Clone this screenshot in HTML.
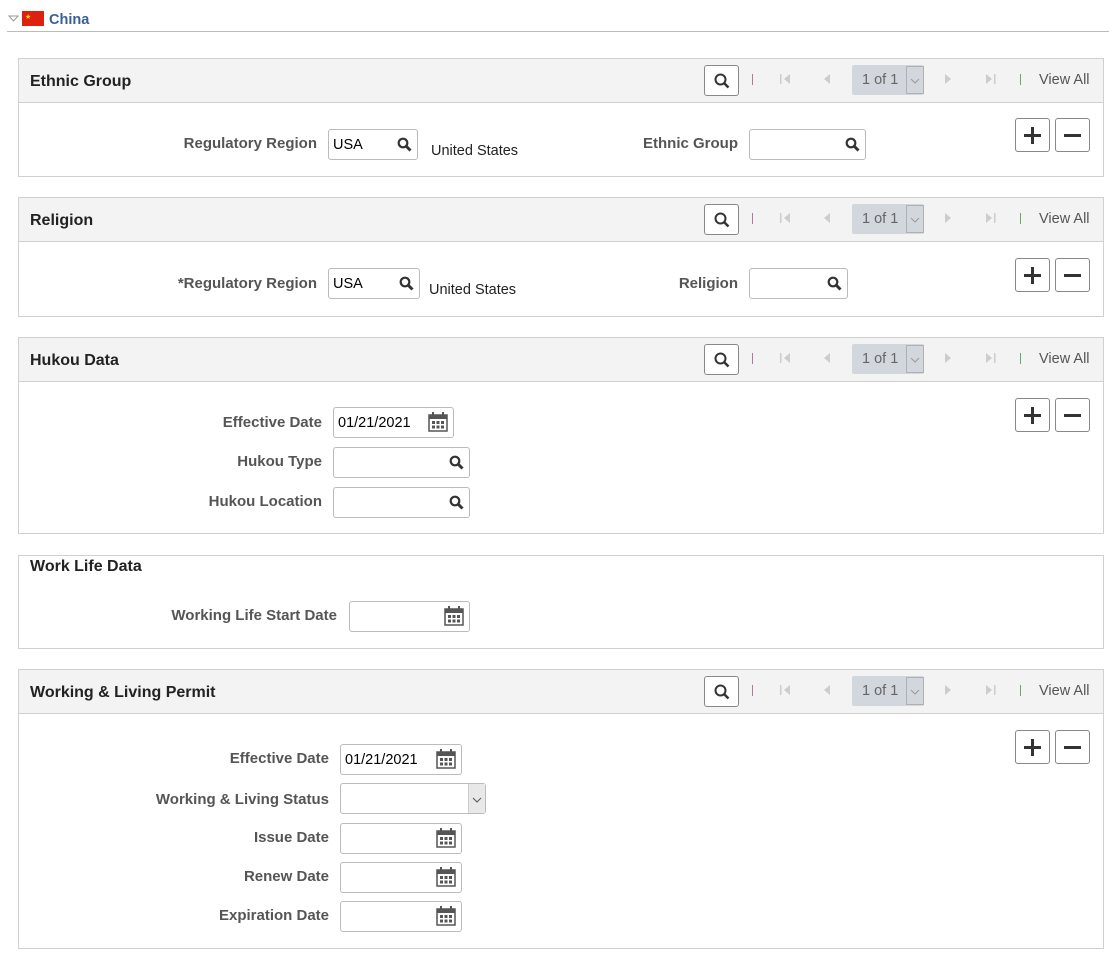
<!DOCTYPE html>
<html><head><meta charset="utf-8"><style>
*{box-sizing:border-box;margin:0;padding:0}
body{width:1116px;height:958px;background:#fff;font-family:"Liberation Sans",Arial,sans-serif;color:#333;position:relative;overflow:hidden}
.a{position:absolute}
.box{position:absolute;left:18px;width:1086px;border:1px solid #d0d0d0;background:#fff}
.hdr{position:absolute;left:0;top:0;width:100%;height:44px;background:#f3f3f3;border-bottom:1px solid #d0d0d0}
.ttl{position:absolute;left:11px;font-weight:bold;font-size:16px;color:#222}
.lbl{position:absolute;font-weight:bold;font-size:15px;color:#555;text-align:right;white-space:nowrap}
.inp{position:absolute;border:1px solid #bbb;border-radius:3px;background:#fff;height:31px;font-size:14.5px;color:#000;padding:7px 0 0 4px}
.btn{position:absolute;width:35px;height:34px;border:1px solid #888;border-radius:3px;background:#fff}
.txt{position:absolute;font-size:14.5px;color:#222}
</style></head><body>
<svg class="a" style="left:8px;top:15px" width="12" height="8"><path d="M1 1h9l-4.5 5z" fill="#fff" stroke="#999"/></svg>
<div class="a" style="left:22px;top:11px;width:22px;height:15px;background:#de2010"></div>
<div class="a" style="left:25px;top:13px;color:#ffde00;font-size:7px">★</div>
<div class="a" style="left:49px;top:12px;font-size:14.5px;color:#3a5f96;font-weight:bold">China</div>
<div class="a" style="left:7px;top:31px;width:1102px;height:1px;background:#bbb"></div>

<script>
function tb(y){
var s='';
s+='<div class="btn" style="left:704px;top:'+(y+7)+'px;height:31px"><svg class="a" style="left:9px;top:7px" width="16" height="16"><circle cx="6.5" cy="6.5" r="5" fill="none" stroke="#333" stroke-width="2"/><path d="M10 10l4.5 4.5" stroke="#333" stroke-width="2.5"/></svg></div>';
s+='<div class="a" style="left:752px;top:'+(y+16)+'px;width:1px;height:11px;background:#b07aa0"></div>';
s+='<svg class="a" style="left:780px;top:'+(y+15)+'px" width="12" height="12"><rect x="0" y="1" width="1.5" height="10" fill="#ccc"/><path d="M10 1v10L4 6z" fill="#ccc"/></svg>';
s+='<svg class="a" style="left:821px;top:'+(y+15)+'px" width="10" height="12"><path d="M9 1v10L3 6z" fill="#ccc"/></svg>';
s+='<div class="a" style="left:852px;top:'+(y+7)+'px;width:72px;height:30px;background:#d2d6dd;border-radius:2px"></div>';
s+='<div class="a" style="left:906px;top:'+(y+8)+'px;width:18px;height:28px;border:1px solid #b0b0b0;background:#d2d6dd"></div>';
s+='<svg class="a" style="left:910px;top:'+(y+20)+'px" width="10" height="6"><path d="M1 1l4 4 4-4" fill="none" stroke="#999"/></svg>';
s+='<div class="a" style="left:862px;top:'+(y+14)+'px;font-size:14.5px;color:#666">1 of 1</div>';
s+='<svg class="a" style="left:944px;top:'+(y+15)+'px" width="10" height="12"><path d="M1 1v10L7 6z" fill="#ccc"/></svg>';
s+='<svg class="a" style="left:985px;top:'+(y+15)+'px" width="12" height="12"><path d="M1 1v10L7 6z" fill="#ccc"/><rect x="9" y="1" width="1.5" height="10" fill="#ccc"/></svg>';
s+='<div class="a" style="left:1020px;top:'+(y+16)+'px;width:1px;height:11px;background:#6a6"></div>';
s+='<div class="a" style="left:1039px;top:'+(y+14)+'px;font-size:14.5px;color:#555">View All</div>';
return s;}
function pm(y){
return '<div class="btn" style="left:1015px;top:'+y+'px"><div class="a" style="left:8px;top:15px;width:17px;height:3px;background:#333"></div><div class="a" style="left:15px;top:8px;width:3px;height:17px;background:#333"></div></div>'+
'<div class="btn" style="left:1055px;top:'+y+'px"><div class="a" style="left:8px;top:15px;width:17px;height:3px;background:#333"></div></div>';}
function mag(x,y){return '<svg class="a" style="left:'+x+'px;top:'+y+'px" width="15" height="15"><circle cx="6" cy="6" r="4.3" fill="none" stroke="#333" stroke-width="2.2"/><path d="M9 9l4.5 4.5" stroke="#333" stroke-width="3"/></svg>';}
function cal(x,y){return '<svg class="a" style="left:'+x+'px;top:'+y+'px" width="20" height="20"><rect x="1" y="3" width="18" height="16" fill="none" stroke="#555" stroke-width="1.5"/><rect x="1" y="3" width="18" height="4" fill="#555"/><rect x="4" y="0" width="2" height="4" fill="#555"/><rect x="14" y="0" width="2" height="4" fill="#555"/><g fill="#555"><rect x="4" y="9" width="3" height="3"/><rect x="8.5" y="9" width="3" height="3"/><rect x="13" y="9" width="3" height="3"/><rect x="4" y="13.5" width="3" height="3"/><rect x="8.5" y="13.5" width="3" height="3"/><rect x="13" y="13.5" width="3" height="3"/></g></svg>';}
function lbl(t,r,cy){return '<div class="lbl" style="right:'+(1116-r)+'px;top:'+(cy-9)+'px">'+t+'</div>';}
function inp(x,y,w,v,icon){var s='<div class="inp" style="left:'+x+'px;top:'+y+'px;width:'+w+'px">'+(v||'')+'</div>';
if(icon=='m')s+=mag(x+w-21,y+8);if(icon=='c')s+=cal(x+w-26,y+5);return s;}
var h='';
h+='<div class="box" style="top:58px;height:119px"><div class="hdr"></div><div class="ttl" style="top:14px">Ethnic Group</div></div>';
h+=tb(58)+pm(118);
h+=lbl('Regulatory Region',317,144)+inp(328,129,90,'USA','m')+'<div class="txt" style="left:431px;top:143px">United States</div>';
h+=lbl('Ethnic Group',738,144)+inp(749,129,117,'','m');
h+='<div class="box" style="top:197px;height:120px"><div class="hdr"></div><div class="ttl" style="top:14px">Religion</div></div>';
h+=tb(197)+pm(258);
h+=lbl('*Regulatory Region',317,284)+inp(328,268,92,'USA','m')+'<div class="txt" style="left:429px;top:282px">United States</div>';
h+=lbl('Religion',738,284)+inp(749,268,99,'','m');
h+='<div class="box" style="top:337px;height:197px"><div class="hdr"></div><div class="ttl" style="top:14px">Hukou Data</div></div>';
h+=tb(337)+pm(398);
h+=lbl('Effective Date',322,423)+inp(333,407,121,'01/21/2021','c');
h+=lbl('Hukou Type',322,462)+inp(333,447,137,'','m');
h+=lbl('Hukou Location',322,502)+inp(333,487,137,'','m');
h+='<div class="box" style="top:555px;height:94px"><div class="ttl" style="top:2px">Work Life Data</div></div>';
h+=lbl('Working Life Start Date',337,616)+inp(349,601,121,'','c');
h+='<div class="box" style="top:669px;height:280px"><div class="hdr"></div><div class="ttl" style="top:14px">Working &amp; Living Permit</div></div>';
h+=tb(669)+pm(730);
h+=lbl('Effective Date',329,759)+inp(340,744,122,'01/21/2021','c');
h+=lbl('Working &amp; Living Status',329,800)+inp(340,783,146,'','')+'<div class="a" style="left:468px;top:784px;width:17px;height:29px;background:#e8e8e8;border-left:1px solid #ccc"></div><svg class="a" style="left:472px;top:797px" width="10" height="6"><path d="M1 1l4 4 4-4" fill="none" stroke="#555"/></svg>';
h+=lbl('Issue Date',329,838)+inp(340,823,122,'','c');
h+=lbl('Renew Date',329,877)+inp(340,862,122,'','c');
h+=lbl('Expiration Date',329,916)+inp(340,901,122,'','c');
document.write(h);
</script>
</body></html>
